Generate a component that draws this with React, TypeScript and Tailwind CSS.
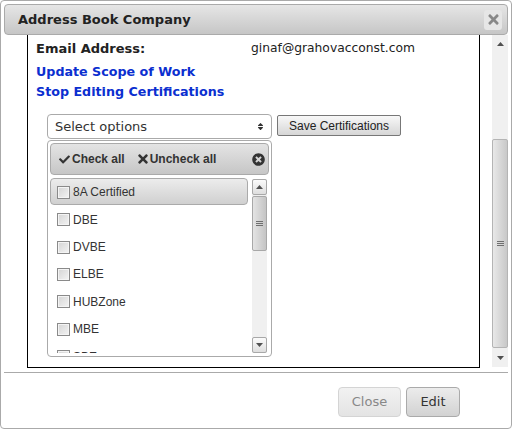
import { FaCheck, FaSort, FaTimes, FaTimesCircle } from "react-icons/fa";

const options = ["DBE", "DVBE", "ELBE", "HUBZone", "MBE", "SBE"];

function Checkbox() {
  return (
    <span className="h-[13px] w-[13px] shrink-0 border border-[#8a8a8a] bg-gradient-to-br from-[#d4d4d4] to-[#f4f4f4] shadow-[inset_0_0_0_1px_#f4f4f4]" />
  );
}

function ScrollButton({ up, small }: { up: boolean; small?: boolean }) {
  return (
    <div
      className={`flex w-full shrink-0 items-center justify-center ${
        small
          ? "h-[16px] rounded-[2px] border border-[#a8a8a8] bg-gradient-to-b from-[#fbfbfb] to-[#dedede]"
          : "h-[18px] bg-[#f0f0f0]"
      }`}>
      <svg width="7" height="4" viewBox="0 0 7 4">
        <path d={up ? "M3.5 0L7 4H0z" : "M0 0h7L3.5 4z"} fill="#505050" />
      </svg>
    </div>
  );
}

function Grip() {
  return (
    <div className="flex flex-col gap-[1px]">
      <div className="h-[1px] w-[7px] bg-[#6f6f6f]" />
      <div className="h-[1px] w-[7px] bg-[#6f6f6f]" />
      <div className="h-[1px] w-[7px] bg-[#6f6f6f]" />
    </div>
  );
}

export default function App() {
  return (
    <div className="flex h-[429px] w-[512px] flex-col rounded-[4px] border border-[#aaaaaa] bg-white p-[3px] font-['DejaVu_Sans',sans-serif] text-[#222222]">
      <div className="flex h-[31px] shrink-0 items-center justify-between rounded-[4px] border border-[#aaaaaa] bg-gradient-to-b from-[#e6e6e6] to-[#c6c6c6] pl-[13px] pr-[5px]">
        <span className="text-[13px] font-bold">Address Book Company</span>
        <div className="flex h-[20px] w-[18px] items-center justify-center rounded-[3px] bg-[#e6e6e6]">
          <FaTimes className="text-[15px] text-[#888888]" />
        </div>
      </div>

      <div className="flex h-[333px] shrink-0">
        <div className="ml-[23px] h-[333px] w-[453px] border-x border-b border-black pl-[8px] pt-[4px]">
          <div className="flex h-[20px] items-center text-[13px]">
            <span className="w-[215px] font-bold">Email Address:</span>
            <span className="mb-[2px] text-[12.3px]">ginaf@grahovacconst.com</span>
          </div>
          <div className="mt-[3px] flex h-[20px] items-center text-[12.7px] font-bold text-[#0b2fd0]">
            Update Scope of Work
          </div>
          <div className="flex h-[20px] items-center text-[12.7px] font-bold text-[#0b2fd0]">
            Stop Editing Certifications
          </div>

          <div className="ml-[11px] mt-[12px] flex items-start gap-[5px]">
            <div className="flex h-[25px] w-[225px] items-center justify-between rounded-[4px] border border-[#aaaaaa] bg-white pl-[7px] pr-[6px] text-[13px] text-[#333333]">
              Select options
              <FaSort className="text-[9px] text-[#333333]" />
            </div>
            <button className="mt-[1px] h-[21px] w-[124px] rounded-[2px] border border-[#777777] bg-gradient-to-b from-[#f8f8f8] to-[#d6d6d6] font-['Liberation_Sans',sans-serif] text-[12px] text-[#222222]">
              Save Certifications
            </button>
          </div>

          <div className="ml-[11px] mt-[1px] h-[217px] w-[225px] rounded-[4px] border border-[#aaaaaa] bg-white p-[2px] font-['Liberation_Sans',sans-serif] text-[12px]">
            <div className="flex h-[32px] items-center rounded-[4px] border border-[#aaaaaa] bg-gradient-to-b from-[#e4e4e4] to-[#c6c6c6] pl-[8px] pr-[3px] font-bold text-[#333333]">
              <FaCheck className="mr-[2px] text-[11px]" />
              <span>Check all</span>
              <FaTimes className="ml-[11px] text-[14px]" />
              <span>Uncheck all</span>
              <FaTimesCircle className="ml-auto text-[13px] text-[#333333]" />
            </div>
            <div className="mt-[3px] flex h-[175px] overflow-hidden">
              <div className="w-[198px] overflow-hidden">
                <div className="flex h-[27px] items-center gap-[3px] rounded-[4px] border border-[#aaaaaa] bg-gradient-to-b from-[#ececec] to-[#d0d0d0] pl-[6px] pt-[1px] text-[#333333]">
                  <Checkbox />
                  8A Certified
                </div>
                <div className="mt-[1px]">
                  {options.map((o) => (
                    <div
                      key={o}
                      className="flex h-[27.4px] items-center gap-[3px] pl-[7px] text-[#333333]">
                      <Checkbox />
                      {o}
                    </div>
                  ))}
                </div>
              </div>
              <div className="ml-[4px] mt-[1px] flex h-[174px] w-[15px] flex-col bg-[#f0f0f0]">
                <ScrollButton up small />
                <div className="mt-[1px] flex h-[55px] items-center justify-center rounded-[2px] border border-[#a8a8a8] bg-gradient-to-r from-[#e4e4e4] to-[#c4c4c4]">
                  <Grip />
                </div>
                <div className="flex-1" />
                <ScrollButton up={false} small />
              </div>
            </div>
          </div>
        </div>

        <div className="ml-[12px] flex h-[332px] w-[16px] flex-col bg-[#f0f0f0]">
          <ScrollButton up />
          <div className="mt-[86px] flex h-[209px] items-center justify-center rounded-[2px] border border-[#b4b4b4] bg-gradient-to-r from-[#e8e8e8] to-[#c8c8c8]">
            <Grip />
          </div>
          <div className="flex-1" />
          <ScrollButton up={false} />
        </div>
      </div>

      <div className="mt-[4px] h-[1px] shrink-0 bg-[#aaaaaa]" />

      <div className="mt-[14px] flex justify-end gap-[5px] pr-[48px] text-[13px]">
        <button className="h-[30px] w-[63px] rounded-[4px] border border-[#d4d4d4] bg-gradient-to-b from-[#f2f2f2] to-[#e4e4e4] text-[#888888]">
          Close
        </button>
        <button className="h-[30px] w-[54px] rounded-[4px] border border-[#aaaaaa] bg-gradient-to-b from-[#ececec] to-[#d2d2d2] text-[#333333]">
          Edit
        </button>
      </div>
    </div>
  );
}
